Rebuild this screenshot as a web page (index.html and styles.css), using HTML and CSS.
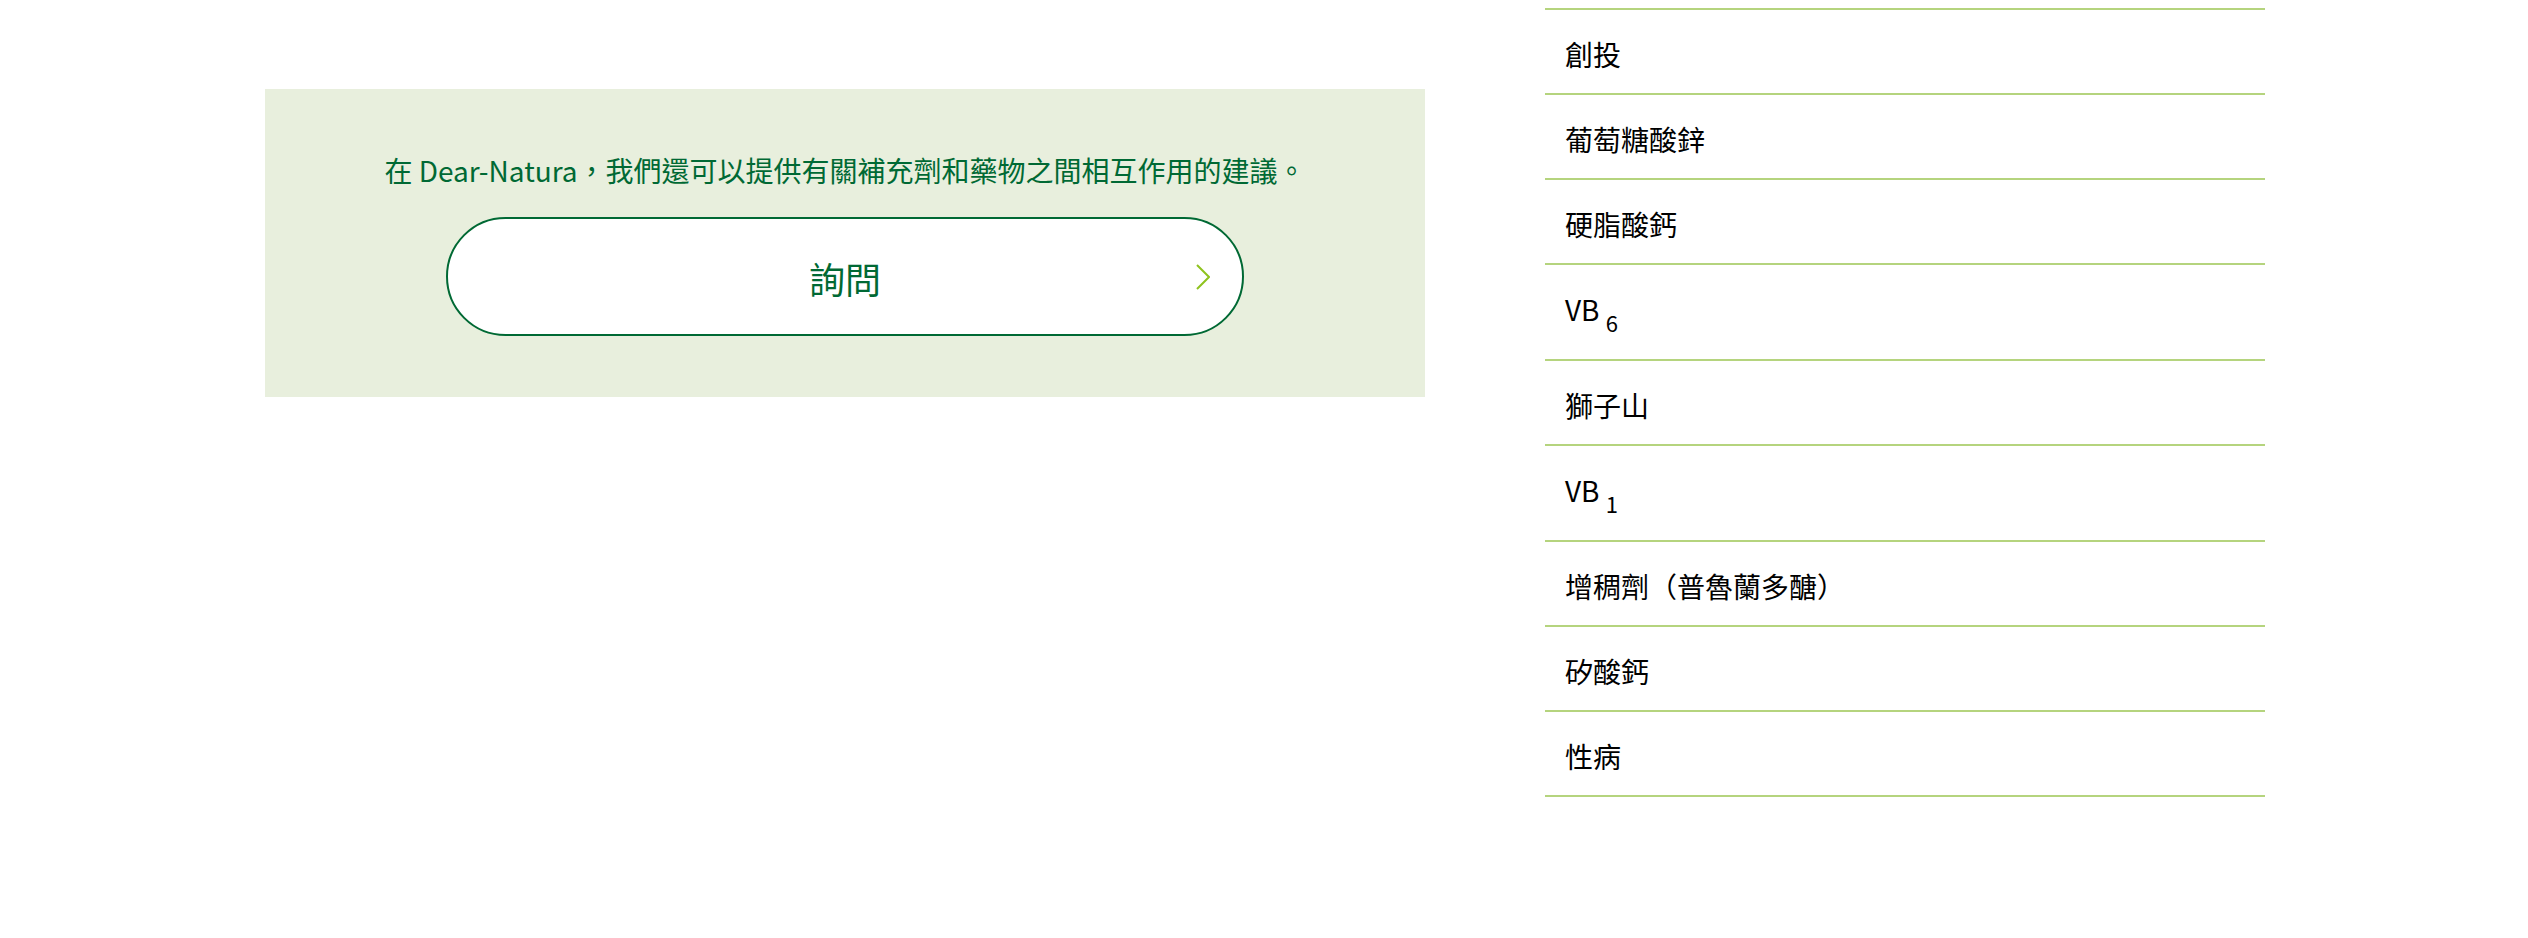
FILE: index.html
```html
<!DOCTYPE html>
<html lang="zh-Hant">
<head>
    <meta charset="UTF-8">
    <meta name="viewport" content="width=device-width, initial-scale=1.0">
    <title>Dear-Natura 成分</title>
    <link rel="stylesheet" href="styles.css">
</head>
<body>
    <div class="page">
        <div class="main">
            <div class="consult">
                <p>在 Dear-Natura，我們還可以提供有關補充劑和藥物之間相互作用的建議。</p>
                <a class="consult-btn" href="#">
                    詢問
                    <svg class="arrow" width="14" height="26" viewBox="0 0 14 26">
                        <polyline points="1,1 13,13 1,25" fill="none" stroke="#8fc31f" stroke-width="2"/>
                    </svg>
                </a>
            </div>
        </div>

        <div class="side">
            <ul class="ingredients">
                <li>創投</li>
                <li>葡萄糖酸鋅</li>
                <li>硬脂酸鈣</li>
                <li>VB <span class="sub">6</span></li>
                <li>獅子山</li>
                <li>VB <span class="sub">1</span></li>
                <li>增稠劑（普魯蘭多醣）</li>
                <li>矽酸鈣</li>
                <li>性病</li>
            </ul>
        </div>
    </div>
</body>
</html>
```

FILE: styles.css
```css
body {
    margin: 0;
    font-family: "Noto Sans CJK TC", "Noto Sans", sans-serif;
    background-color: #fff;
    color: #000;
}
.page {
    width: 2000px;
    margin: 0 auto;
    padding: 8px 0 0 2px;
    display: flex;
    align-items: flex-start;
    gap: 120px;
}
.main {
    width: 1160px;
    margin-top: 81px;
}
.consult {
    background-color: #e8efdd;
    padding: 60px 0 61px;
    text-align: center;
}
.consult p {
    margin: 0;
    font-size: 28px;
    line-height: 42px;
    color: #006934;
}
.consult-btn {
    position: relative;
    display: flex;
    align-items: center;
    justify-content: center;
    width: 798px;
    height: 119px;
    box-sizing: border-box;
    margin: 26px auto 0;
    padding-top: 2px;
    border: 2px solid #006934;
    border-radius: 60px;
    background-color: #fff;
    color: #006934;
    font-size: 36px;
    text-decoration: none;
}
.consult-btn .arrow {
    position: absolute;
    right: 32px;
    top: 50%;
    transform: translateY(-50%);
}
.side {
    width: 720px;
}
.ingredients {
    list-style: none;
    margin: 0;
    padding: 0;
    border-top: 2px solid #b5d47e;
}
.ingredients li {
    padding: 23px 20px 18px;
    font-size: 28px;
    line-height: 42px;
    border-bottom: 2px solid #b5d47e;
}
.ingredients .sub {
    font-size: 22px;
    line-height: 37px;
    vertical-align: -11px;
}
```
